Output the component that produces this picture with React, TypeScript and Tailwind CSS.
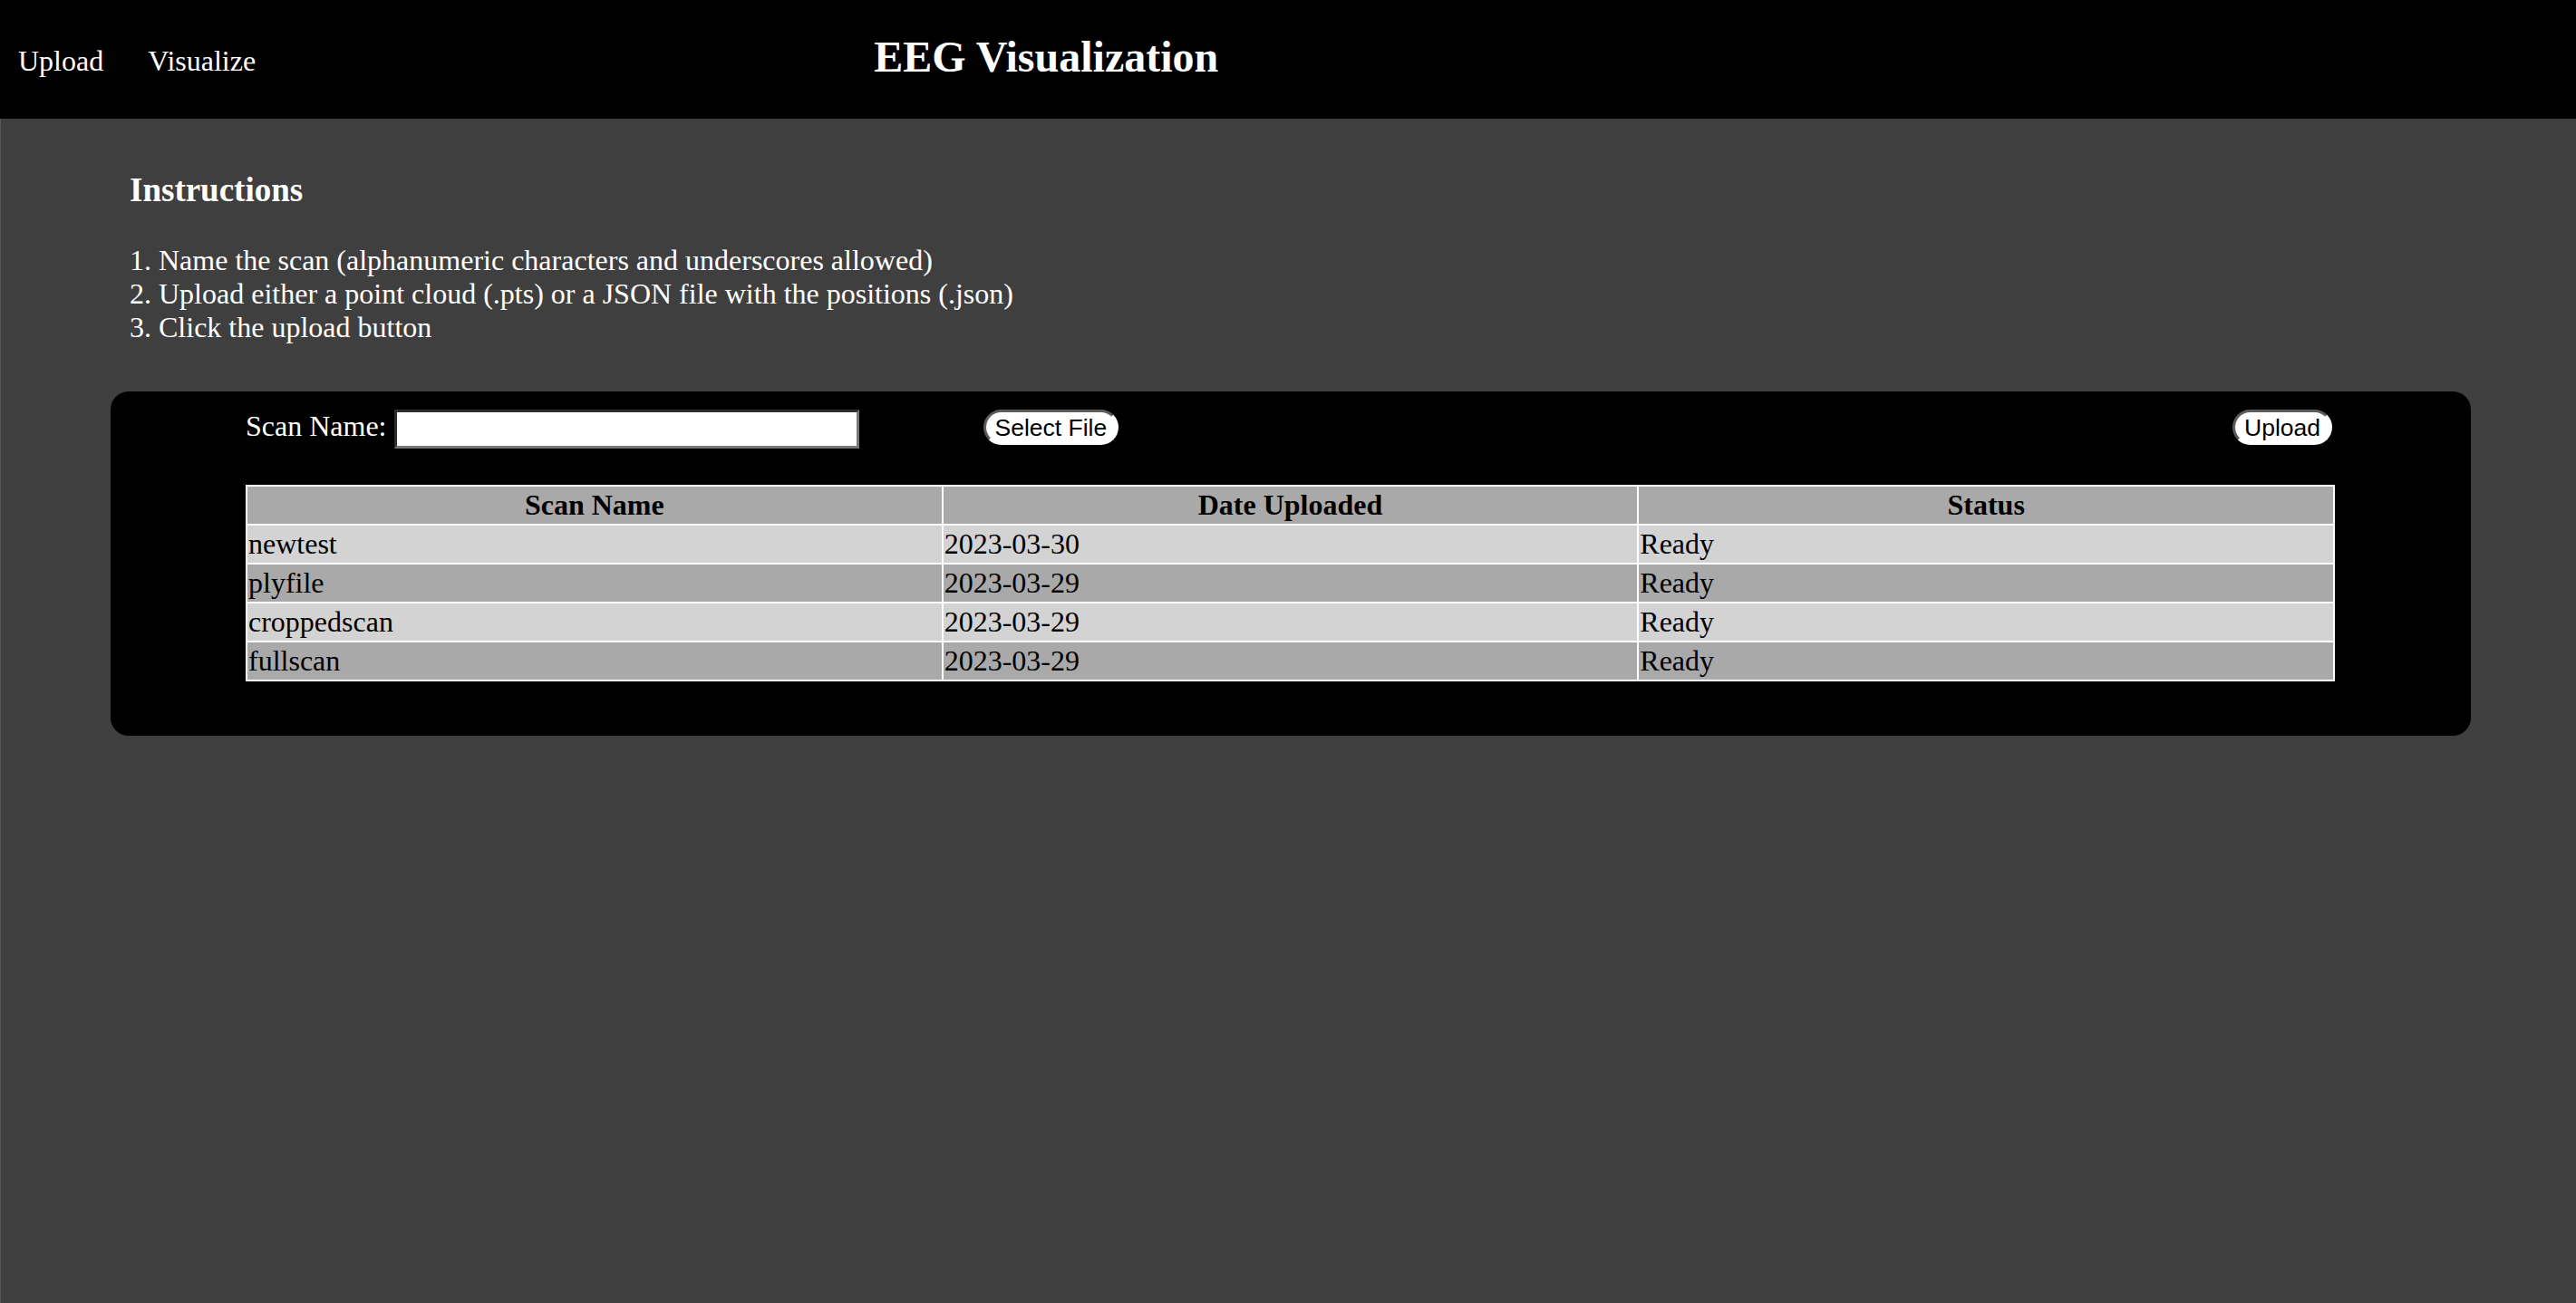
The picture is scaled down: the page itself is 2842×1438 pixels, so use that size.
const scans = [
  { name: "newtest", date: "2023-03-30", status: "Ready" },
  { name: "plyfile", date: "2023-03-29", status: "Ready" },
  { name: "croppedscan", date: "2023-03-29", status: "Ready" },
  { name: "fullscan", date: "2023-03-29", status: "Ready" },
];

const App = () => {
  return (
    <div className="flex min-h-screen flex-col bg-[#3f3f3f] font-['Liberation_Serif',serif] text-white">
      {/* HEADER */}
      <header className="flex h-[131px] shrink-0 items-start bg-black">
        <nav className="ml-[20px] mt-[49px] flex gap-[49px] text-[32px] leading-[37px]">
          <a href="#upload">Upload</a>
          <a href="#visualize">Visualize</a>
        </nav>
        <h1 className="ml-[682px] mt-[35px] text-[48px] font-bold leading-[55px]">
          EEG Visualization
        </h1>
      </header>

      <main className="flex-1 border-l border-[#585858]">
        {/* INSTRUCTIONS */}
        <section className="pl-[142px]">
          <h2 className="mt-[58px] text-[37px] font-bold leading-[41px]">Instructions</h2>
          <ol className="mt-[39px] text-[32px] leading-[1.15]">
            <li>1. Name the scan (alphanumeric characters and underscores allowed)</li>
            <li>2. Upload either a point cloud (.pts) or a JSON file with the positions (.json)</li>
            <li>3. Click the upload button</li>
          </ol>
        </section>

        {/* UPLOAD PANEL */}
        <section className="ml-[121px] mt-[53px] w-[2604px] rounded-[20px] bg-black pb-[60px] pl-[149px] pr-[150px] pt-[20px]">
          <div className="flex items-start">
            <label className="text-[32px] leading-[37px]">Scan Name:</label>
            <input
              type="text"
              className="ml-[8px] h-[43px] w-[513px] border-[3px] border-b-[#767676] border-l-[#2e2e2e] border-r-[#767676] border-t-[#2e2e2e] bg-white text-[26px] text-black outline-none"
            />
            <button className="ml-[137px] h-[39px] rounded-full border-[3px] border-b-white border-l-[#5c5c5c] border-r-white border-t-[#5c5c5c] bg-white px-[10px] font-['Liberation_Sans',sans-serif] text-[26.5px] leading-none text-black">
              Select File
            </button>
            <button className="ml-auto mr-[3px] h-[39px] rounded-full border-[3px] border-b-white border-l-[#5c5c5c] border-r-white border-t-[#5c5c5c] bg-white px-[10px] font-['Liberation_Sans',sans-serif] text-[26.5px] leading-none text-black">
              Upload
            </button>
          </div>

          <table className="mt-[40px] w-full table-fixed border-separate border-spacing-[2px] bg-white text-[32px] leading-[37px] text-black">
            <thead>
              <tr className="bg-[#a9a9a9]">
                <th className="h-[41px] p-[1px] text-center font-bold">Scan Name</th>
                <th className="h-[41px] p-[1px] text-center font-bold">Date Uploaded</th>
                <th className="h-[41px] p-[1px] text-center font-bold">Status</th>
              </tr>
            </thead>
            <tbody>
              {scans.map((scan, i) => (
                <tr key={scan.name} className={i % 2 === 0 ? "bg-[#d3d3d3]" : "bg-[#a9a9a9]"}>
                  <td className="h-[41px] p-[1px] text-left">{scan.name}</td>
                  <td className="h-[41px] p-[1px] text-left">{scan.date}</td>
                  <td className="h-[41px] p-[1px] text-left">{scan.status}</td>
                </tr>
              ))}
            </tbody>
          </table>
        </section>
      </main>
    </div>
  );
};

export default App;
